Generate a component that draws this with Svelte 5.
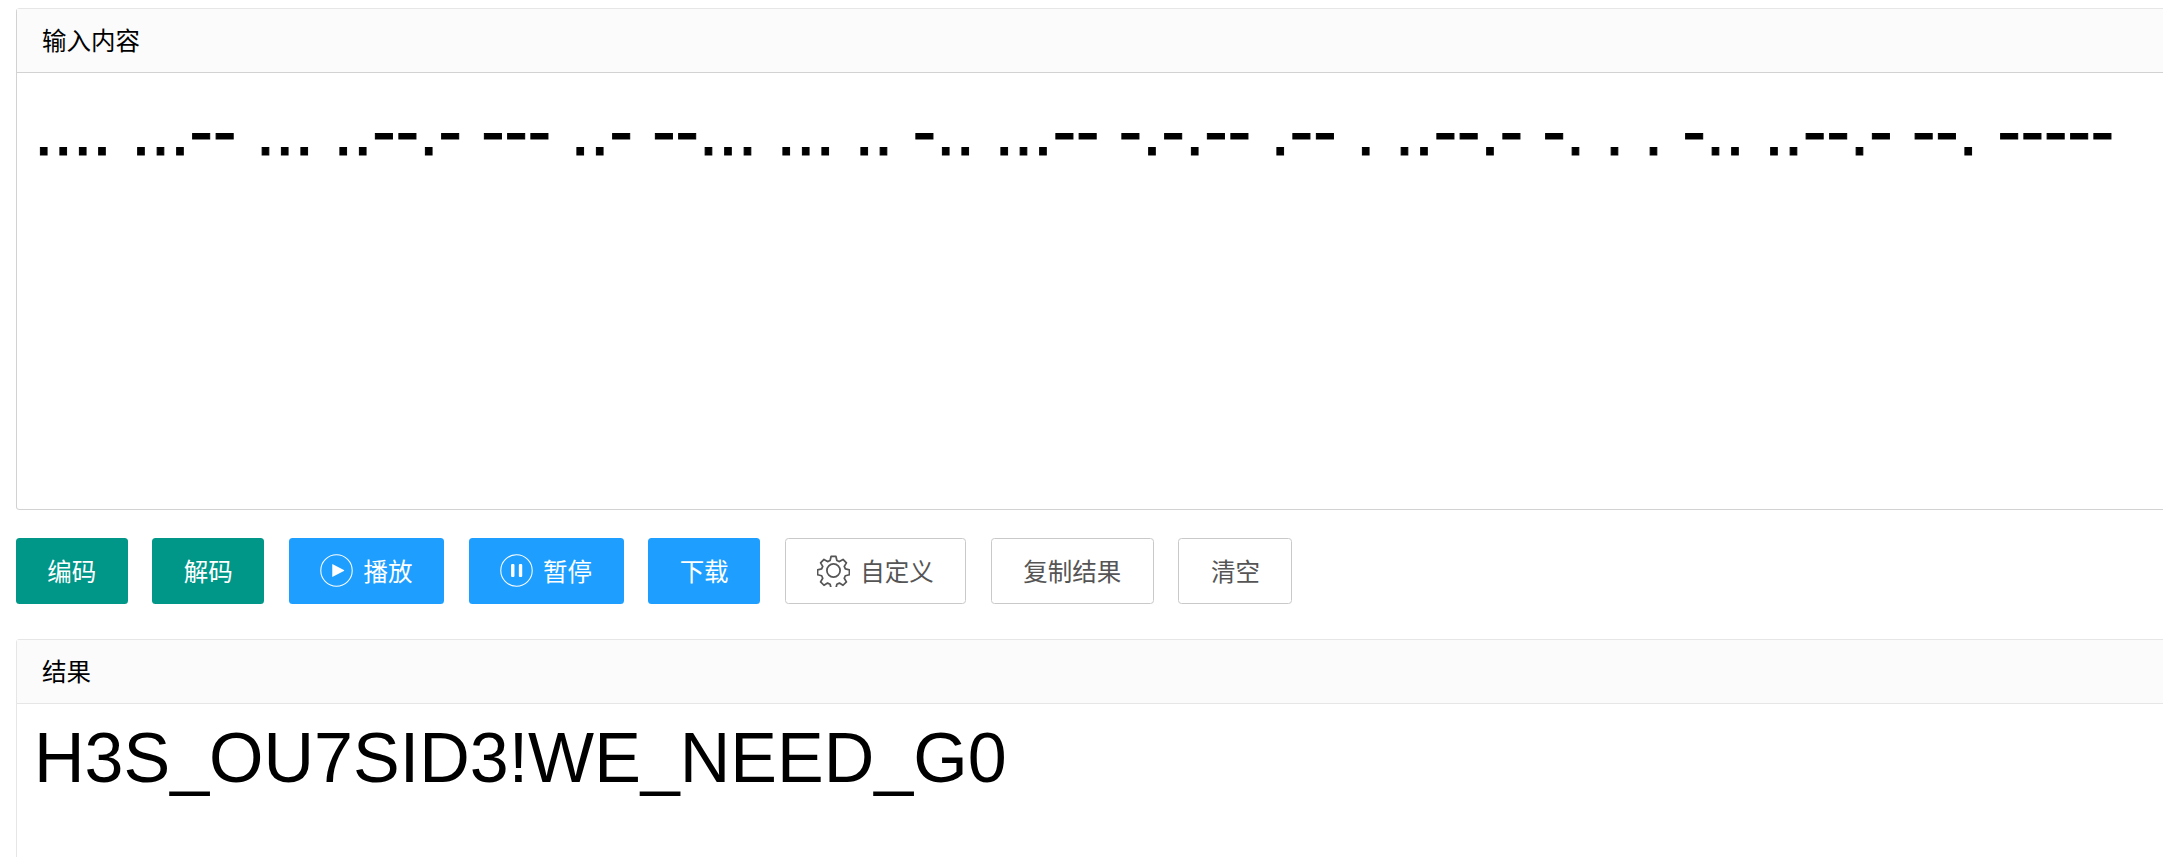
<script lang="ts">
  const morse = '.... ...-- ... ..--.- --- ..- --... ... .. -.. ...-- -.-.-- .-- . ..--.- -. . . -.. ..--.- --. -----';
  const result = 'H3S_OU7SID3!WE_NEED_G0';
</script>

<main class="page">
  <section class="panel">
    <div class="panel-head">输入内容</div>
    <div class="morse">{morse}</div>
  </section>

  <div class="actions">
    <button class="btn green">编码</button>
    <button class="btn green">解码</button>
    <button class="btn blue">
      <svg class="icon" viewBox="0 0 34 34" aria-hidden="true">
        <circle cx="17" cy="17" r="16.2" fill="none" stroke="currentColor" stroke-width="1.1" />
        <path d="M12.6 10.4 24.6 16.5Q25.4 17 24.6 17.5L12.6 23.6Z" fill="currentColor" />
      </svg>
      <span>播放</span>
    </button>
    <button class="btn blue">
      <svg class="icon" viewBox="0 0 34 34" aria-hidden="true">
        <circle cx="17" cy="17" r="16.2" fill="none" stroke="currentColor" stroke-width="1.1" />
        <rect x="11.4" y="10.2" width="3.5" height="13.6" rx="1.2" fill="currentColor" />
        <rect x="19.4" y="10.2" width="3.5" height="13.6" rx="1.2" fill="currentColor" />
      </svg>
      <span>暂停</span>
    </button>
    <button class="btn blue">下载</button>
    <button class="btn plain">
      <svg class="icon" viewBox="0 0 34 34" aria-hidden="true">
        <circle cx="17" cy="17" r="6.8" fill="none" stroke="currentColor" stroke-width="1.8" />
        <path d="M14.5 2.5h5l1 4.2 2.6 1.1 3.7-2.2 3.5 3.5-2.2 3.7 1.1 2.6 4.2 1v5l-4.2 1-1.1 2.6 2.2 3.7-3.5 3.5-3.7-2.2-2.6 1.1-1 4.2h-5l-1-4.2-2.6-1.1-3.7 2.2-3.5-3.5 2.2-3.7-1.1-2.6-4.2-1v-5l4.2-1 1.1-2.6-2.2-3.7 3.5-3.5 3.7 2.2 2.6-1.1z" fill="none" stroke="currentColor" stroke-width="1.8" stroke-linejoin="round" />
      </svg>
      <span>自定义</span>
    </button>
    <button class="btn plain">复制结果</button>
    <button class="btn plain">清空</button>
  </div>

  <section class="panel result">
    <div class="panel-head">结果</div>
    <div class="output">{result}</div>
  </section>
</main>

<style>
  :global(body) {
    margin: 0;
    background: #fff;
    overflow: hidden;
  }

  .page {
    width: 2163px;
    height: 857px;
    overflow: hidden;
    padding: 8px 0 0 16px;
    box-sizing: border-box;
    font-family: "Liberation Sans", "Noto Sans CJK SC", sans-serif;
  }

  .panel {
    width: 2300px;
    height: 502px;
    box-sizing: border-box;
    border: 1px solid #d2d2d2;
    border-top-color: #e6e6e6;
    border-radius: 3.5px;
  }

  .panel-head {
    height: 64px;
    box-sizing: border-box;
    padding: 0 0 3px 25px;
    display: flex;
    align-items: center;
    background: #fbfbfb;
    border-bottom: 1px solid #d2d2d2;
    font-size: 24.5px;
    color: #000;
  }

  .morse {
    padding: 16px 17px 0;
    font-size: 70px;
    line-height: 84px;
    color: #000;
    white-space: pre;
    -webkit-text-stroke: 1px #000;
  }

  .actions {
    display: flex;
    gap: 24.6px;
    margin: 28px 0 0 -0.25px;
  }

  .btn {
    height: 66px;
    padding: 0 31.5px 2px;
    display: flex;
    align-items: center;
    box-sizing: border-box;
    border: none;
    border-radius: 3.5px;
    font-family: inherit;
    font-size: 24.5px;
  }

  .green {
    background: #009688;
    color: #fff;
  }

  .blue {
    background: #1e9fff;
    color: #fff;
  }

  .plain {
    background: #fff;
    color: #555;
    border: 1px solid #c9c9c9;
  }

  .icon {
    width: 33px;
    height: 33px;
    margin-right: 10px;
  }

  .result {
    margin-top: 35px;
    height: 300px;
    border-color: #e6e6e6;
    border-bottom: none;
  }

  .result .panel-head {
    border-bottom-color: #e6e6e6;
  }

  .output {
    padding: 14px 17px 0;
    font-size: 70px;
    line-height: 80px;
    color: #000;
  }
</style>
